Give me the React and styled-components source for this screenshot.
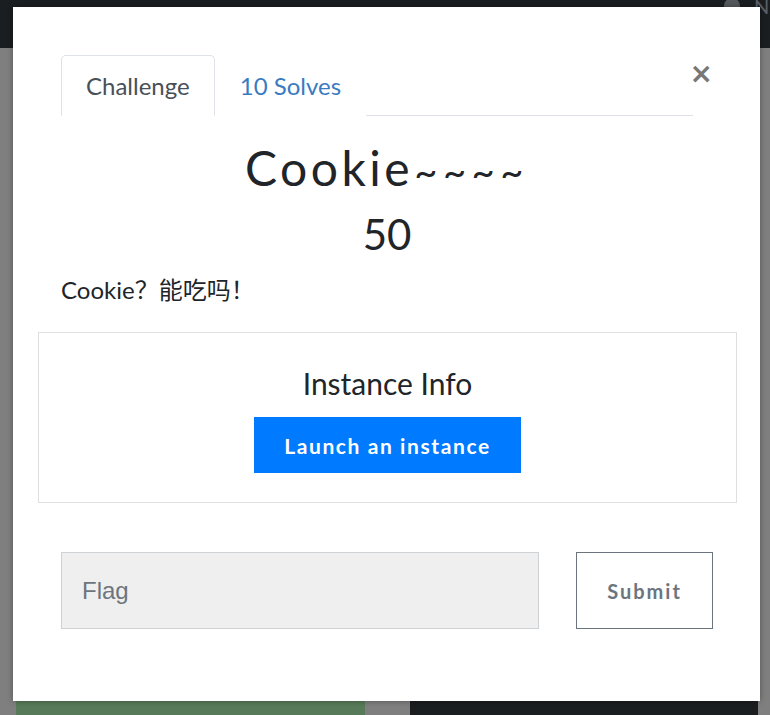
import React from 'react';
import styled, { createGlobalStyle } from 'styled-components';

const GlobalStyle = createGlobalStyle`
  html, body {
    margin: 0;
    padding: 0;
    background: #7f7f7f;
  }
  body {
    font-family: Lato, "Noto Sans CJK SC", sans-serif;
    color: #212529;
  }
  * {
    box-sizing: border-box;
  }
`;

const App = () => {
  return (
    <>
      <GlobalStyle />
      <Page>
        <Navbar>
          <NavUser>
            <Avatar />
            <NavName>N</NavName>
          </NavUser>
        </Navbar>
        <Content>
          <CardRow>
            <Card $color="#577a58" $width="349px" />
            <Card $color="#1b1e21" $width="348px" />
          </CardRow>
        </Content>

        <Modal>
          <CloseButton aria-label="Close">×</CloseButton>
          <TabNav>
            <Tab $active>Challenge</Tab>
            <Tab>10 Solves</Tab>
          </TabNav>

          <Title>
            Cookie<Tilde>~~~~</Tilde>
          </Title>
          <Points>50</Points>
          <Description>Cookie？能吃吗！</Description>

          <InstanceBox>
            <InstanceTitle>Instance Info</InstanceTitle>
            <LaunchButton>Launch an instance</LaunchButton>
          </InstanceBox>

          <FlagForm onSubmit={(e) => e.preventDefault()}>
            <FlagInput placeholder="Flag" />
            <SubmitButton type="submit">Submit</SubmitButton>
          </FlagForm>
        </Modal>
      </Page>
    </>
  );
};

export default App;

const Page = styled.div`
  position: relative;
  width: 770px;
  height: 715px;
  overflow: hidden;
  display: flex;
  flex-direction: column;
`;

const Navbar = styled.div`
  height: 48px;
  background: #1a1e21;
  display: flex;
  justify-content: flex-end;
  align-items: flex-start;
`;

const NavUser = styled.div`
  display: flex;
  align-items: center;
  gap: 14px;
  margin-top: -6px;
  width: 46px;
`;

const Avatar = styled.div`
  width: 16px;
  height: 16px;
  border-radius: 50%;
  background: #555a5e;
  flex-shrink: 0;
`;

const NavName = styled.span`
  font-family: Lato, sans-serif;
  font-size: 20px;
  color: #5d6166;
`;

const Content = styled.div`
  flex: 1;
  display: flex;
  flex-direction: column;
  justify-content: flex-end;
`;

const CardRow = styled.div`
  display: flex;
  gap: 45px;
  padding-left: 16px;
`;

const Card = styled.div`
  width: ${(p) => p.$width};
  height: 120px;
  background: ${(p) => p.$color};
`;

const Modal = styled.div`
  position: absolute;
  top: 7px;
  left: 13px;
  width: 747px;
  height: 694px;
  background: #fff;
  box-shadow: 0 0 6px rgba(0, 0, 0, 0.35);
  padding: 48px 47px 0 48px;
`;

const CloseButton = styled.button`
  position: absolute;
  top: 51px;
  right: 47px;
  border: none;
  background: none;
  padding: 0;
  font-family: "DejaVu Sans", sans-serif;
  font-size: 28px;
  font-weight: bold;
  line-height: 32px;
  color: #777;
  cursor: pointer;
`;

const TabNav = styled.div`
  display: flex;
  margin-right: 20px;
  border-bottom: 1px solid #dee2e6;
`;

const Tab = styled.div`
  height: 61px;
  padding: 0 24px;
  margin-bottom: -1px;
  display: flex;
  align-items: center;
  font-size: 24px;
  border: 1px solid ${(p) => (p.$active ? '#dee2e6' : 'transparent')};
  border-bottom-color: ${(p) => (p.$active ? '#fff' : 'transparent')};
  border-radius: 5px 5px 0 0;
  color: ${(p) => (p.$active ? '#495057' : '#3a7bbf')};
  background: #fff;
  cursor: pointer;
`;

const Title = styled.h2`
  margin: 23px 0 0;
  text-align: center;
  font-family: Lato, sans-serif;
  font-weight: 400;
  font-size: 48px;
  line-height: 58px;
  letter-spacing: 3.5px;
  color: #212529;
`;

const Tilde = styled.span`
  font-size: 40px;
  line-height: 1;
  letter-spacing: 5.5px;
  margin-left: 1px;
`;

const Points = styled.h3`
  margin: 12px 0 0;
  text-align: center;
  font-weight: 400;
  font-size: 42px;
  line-height: 50px;
  color: #212529;
`;

const Description = styled.p`
  margin: 16px 0 0;
  font-size: 24px;
  line-height: 30px;
  color: #212529;
`;

const InstanceBox = styled.div`
  margin: 27px -24px 0 -23px;
  height: 171px;
  border: 1px solid #dfdfdf;
  display: flex;
  flex-direction: column;
  align-items: center;
  padding-top: 32px;
`;

const InstanceTitle = styled.div`
  font-size: 30px;
  line-height: 36px;
  color: #212529;
`;

const LaunchButton = styled.button`
  margin-top: 16px;
  width: 267px;
  height: 56px;
  border: none;
  background: #007bff;
  color: #fff;
  font-family: Lato, sans-serif;
  font-weight: 700;
  font-size: 21px;
  letter-spacing: 1.6px;
  cursor: pointer;
`;

const FlagForm = styled.form`
  margin-top: 49px;
  display: flex;
  justify-content: space-between;
`;

const FlagInput = styled.input`
  width: 478px;
  height: 77px;
  background: #efefef;
  border: 1px solid #cfd2d5;
  padding: 0 20px;
  font-family: "Liberation Sans", Arial, sans-serif;
  font-size: 24px;
  color: #495057;
  outline: none;
  &::placeholder {
    color: #6c757d;
  }
`;

const SubmitButton = styled.button`
  width: 137px;
  height: 77px;
  background: #fff;
  border: 1px solid #6c757d;
  font-family: Lato, sans-serif;
  font-weight: 700;
  font-size: 20px;
  letter-spacing: 2px;
  color: #6c757d;
  cursor: pointer;
`;
